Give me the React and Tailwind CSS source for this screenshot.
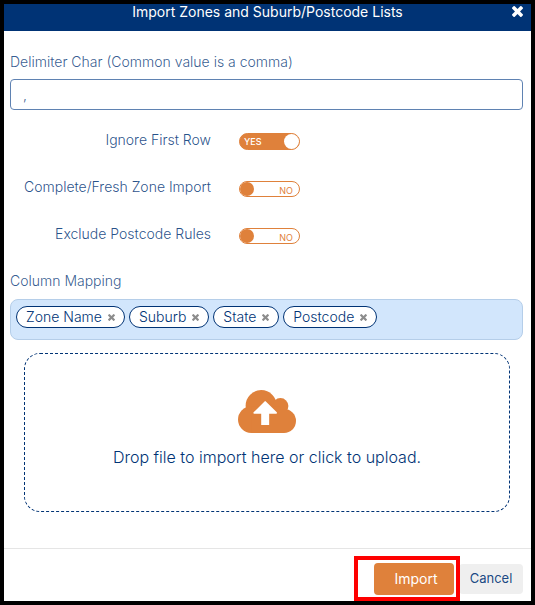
import React, { useState } from 'react';

const initialToggles = [
  { id: 'ignoreFirstRow', label: 'Ignore First Row', on: true },
  { id: 'freshImport', label: 'Complete/Fresh Zone Import', on: false },
  { id: 'excludeRules', label: 'Exclude Postcode Rules', on: false },
];

const initialColumns = ['Zone Name', 'Suburb', 'State', 'Postcode'];

const CrossIcon = ({ className }) => (
  <svg viewBox="302 366 1188 1188" className={className} fill="currentColor" aria-hidden="true">
    <path d="M1490 1322q0 40-28 68l-136 136q-28 28-68 28t-68-28l-294-294-294 294q-28 28-68 28t-68-28l-136-136q-28-28-28-68t28-68l294-294-294-294q-28-28-28-68t28-68l136-136q28-28 68-28t68 28l294 294 294-294q28-28 68-28t68 28l136 136q28 28 28 68t-28 68l-294 294 294 294q28 28 28 68z" />
  </svg>
);

const CloudIcon = () => (
  <svg viewBox="0 0 175 129" className="w-[58px] h-[43px] text-[#df813b]" fill="currentColor" aria-hidden="true">
    <circle cx="70" cy="47" r="47" />
    <circle cx="128" cy="48" r="24" />
    <circle cx="40" cy="89" r="40" />
    <circle cx="139" cy="93" r="36" />
    <path d="M40 50H128V60H139V129H40Z" />
    <path fill="#fff" d="M80 34Q82 32 84 34L117 67Q119 71 115 71H94V105H70V71H49Q45 71 47 67Z" />
  </svg>
);

const ToggleRow = ({ id, label, on, onChange }) => (
  <div className="flex items-start gap-7 h-[17px]">
    <label htmlFor={id} className="w-[201px] text-right text-sm leading-[14px] text-[#003375]/85">{label}</label>
    <label
      htmlFor={id}
      className={`flex items-center justify-between w-[61px] rounded-full border border-[#df813b] text-[9px] leading-none ${
        on ? 'h-[17px] pl-1 bg-[#df813b] text-white font-medium' : 'self-end h-4 pr-1.5 flex-row-reverse bg-white text-[#df813b] font-normal'
      }`}
    >
      <input id={id} type="checkbox" className="sr-only" checked={on} onChange={onChange} />
      <span className={on ? '' : 'pt-0.5'}>{on ? 'YES' : 'NO'}</span>
      <span className={on ? 'w-[15px] h-[15px] rounded-full bg-white' : 'w-3.5 h-3.5 rounded-full bg-[#df813b]'} />
    </label>
  </div>
);

const App = () => {
  const [delimiter, setDelimiter] = useState(',');
  const [toggles, setToggles] = useState(initialToggles);
  const [columns, setColumns] = useState(initialColumns);

  const flip = (id) => setToggles(toggles.map((t) => (t.id === id ? { ...t, on: !t.on } : t)));

  return (
    <div className="border-4 border-black bg-white font-['Inter',sans-serif] font-light text-[#003375]">
      <header className="relative bg-[#003375] text-white text-center pb-[11px]">
        <h1 className="text-sm leading-[15px] pb-px font-normal">Import Zones and Suburb/Postcode Lists</h1>
        <button type="button" aria-label="Close" className="absolute right-2 top-0 h-[15px]">
          <CrossIcon className="w-[11px] h-[11px]" />
        </button>
      </header>

      <main className="pl-1.5 pr-2 pt-[23px] pb-9">
        <label htmlFor="delimiter" className="block text-sm leading-4 text-[#003375]/80">
          Delimiter Char (Common value is a comma)
        </label>
        <input
          id="delimiter"
          type="text"
          value={delimiter}
          onChange={(e) => setDelimiter(e.target.value)}
          className="mt-[9px] block w-full h-[31px] px-3 rounded border border-[#5f82b2] text-sm text-[#003375]/80"
        />

        <div className="mt-[23px] flex flex-col gap-[30px]">
          {toggles.map((t) => (
            <ToggleRow key={t.id} {...t} onChange={() => flip(t.id)} />
          ))}
        </div>

        <h2 className="mt-7 text-sm leading-[18px] text-[#003375]/80">Column Mapping</h2>
        <div className="mt-[9px] min-h-[41px] px-[5px] py-1.5 flex flex-wrap items-start gap-1 rounded-lg border border-[#b5cee9] bg-[#d2e6fc]">
          {columns.map((c) => (
            <span key={c} className="flex items-center gap-1.5 h-[22px] px-[9px] rounded-full border border-[#003375] bg-white text-sm">
              {c}
              <button
                type="button"
                aria-label={`Remove ${c}`}
                className="text-[#8c8c8c]"
                onClick={() => setColumns(columns.filter((x) => x !== c))}
              >
                <CrossIcon className="w-[7px] h-[7px]" />
              </button>
            </span>
          ))}
        </div>

        <label className="mt-[13px] ml-3.5 mr-[13px] h-[159px] flex flex-col items-center gap-3.5 pt-9 rounded-2xl border border-dashed border-[#003375]">
          <CloudIcon />
          <span className="text-base leading-5">Drop file to import here or click to upload.</span>
          <input type="file" className="sr-only" />
        </label>
      </main>

      <footer className="flex justify-end items-center gap-[5px] h-[53px] px-2 pt-2 border-t border-[#e5e5e5]">
        <div className="relative">
          <button type="button" className="block w-20 h-8 pl-1 rounded bg-[#df813b] text-white text-sm font-normal">Import</button>
          <div className="absolute -left-5 -right-1.5 -top-[7px] -bottom-1.5 z-10 border-4 border-[#fe0000] pointer-events-none" />
        </div>
        <button type="button" className="w-16 h-[30px] rounded bg-[#efefef] text-[13px] font-normal text-[#003375]/90">Cancel</button>
      </footer>
    </div>
  );
};

export default App;
